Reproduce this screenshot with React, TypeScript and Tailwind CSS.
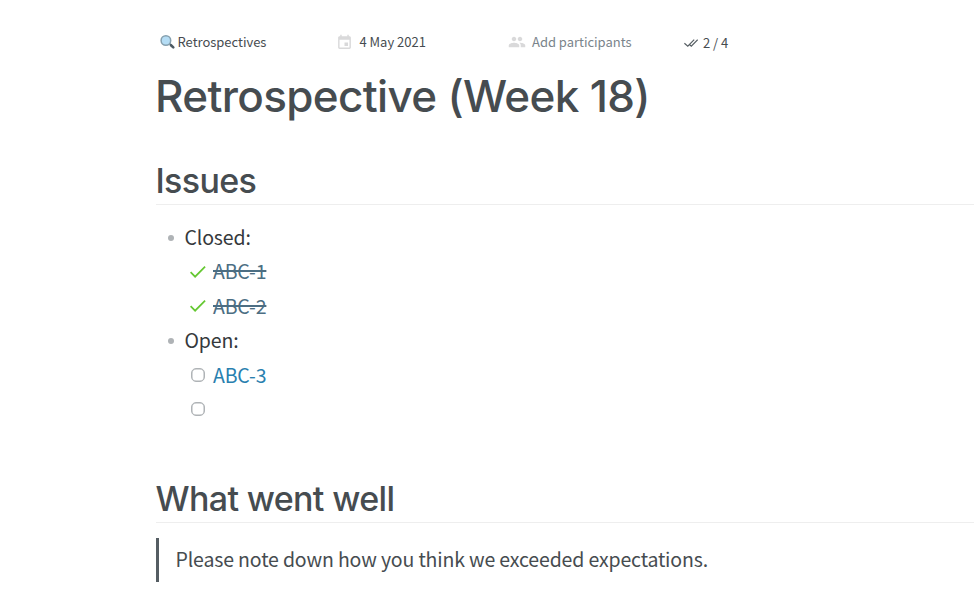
import React from 'react';

interface ListItem {
  label: string;
  tasks: { name: string; done: boolean }[];
}

const items: ListItem[] = [
  {
    label: 'Closed:',
    tasks: [
      { name: 'ABC-1', done: true },
      { name: 'ABC-2', done: true }
    ]
  },
  {
    label: 'Open:',
    tasks: [
      { name: 'ABC-3', done: false },
      { name: '', done: false }
    ]
  }
];

const SearchIcon = () => (
  <svg width="16" height="16" viewBox="0 0 16 16" fill="none">
    <path d="M9.5 9.5l1.6 1.6" stroke="#78909c" strokeWidth="1.8" />
    <path d="M11 11.2l2.3 2.2" stroke="#4c5a63" strokeWidth="2.6" strokeLinecap="round" />
    <circle cx="5.9" cy="6.5" r="4.8" fill="#b5ddf5" stroke="#86a0af" strokeWidth="1.5" />
  </svg>
);

const CalendarIcon = () => (
  <svg width="17" height="17" viewBox="0 0 24 24" fill="#d9d9da">
    <path d="M17 12h-5v5h5v-5zM16 1v2H8V1H6v2H5c-1.11 0-1.99.9-1.99 2L3 19c0 1.1.89 2 2 2h14c1.1 0 2-.9 2-2V5c0-1.1-.9-2-2-2h-1V1h-2zm3 18H5V8h14v11z" />
  </svg>
);

const PeopleIcon = () => (
  <svg width="18" height="18" viewBox="0 0 24 24" fill="#d9d9da">
    <path d="M16 11c1.66 0 2.99-1.34 2.99-3S17.66 5 16 5s-3 1.34-3 3 1.34 3 3 3zm-8 0c1.66 0 2.99-1.34 2.99-3S9.66 5 8 5 5 6.34 5 8s1.34 3 3 3zm0 2c-2.33 0-7 1.17-7 3.5V19h14v-2.5c0-2.33-4.67-3.5-7-3.5zm8 0c-.29 0-.62.02-.97.05 1.16.84 1.97 1.97 1.97 3.45V19h6v-2.5c0-2.33-4.67-3.5-7-3.5z" />
  </svg>
);

const DoubleCheckIcon = () => (
  <svg width="14" height="10" viewBox="0 0 14 10" fill="none" stroke="#565e63" strokeWidth="1.2">
    <path d="M.4 5.2l3.4 3 6.4-6.5M5.2 6.2l2.1 2L13.7 1.7" />
  </svg>
);

const CheckIcon = () => (
  <svg width="16" height="12" viewBox="0 0 16 12" fill="none" stroke="#65c832" strokeWidth="1.7">
    <path d="M.6 6.1l4.5 4.6L15.1.6" />
  </svg>
);

const Heading = ({ children }: { children: React.ReactNode }) => (
  <h2 className="h-[50px] border-b border-[#eeeeee] font-['Inter',sans-serif] text-[34px] font-[450] leading-[51px] tracking-[-0.65px] text-[#464c50]">
    <span className="-ml-[0.5px]">{children}</span>
  </h2>
);

export default function App() {
  return (
    <div className="h-[607px] overflow-hidden bg-white pl-[156px] pt-8 font-['Noto_Sans_CJK_SC',sans-serif] text-[#464c50]">
      <div className="flex h-5 items-center text-[13px] leading-5 tracking-[-0.02px]">
        <div className="flex w-[180px] items-center pl-[4px]">
          <SearchIcon />
          <span className="ml-[1.5px]">Retrospectives</span>
        </div>
        <div className="flex w-[172px] items-center">
          <CalendarIcon />
          <span className="ml-[6.5px]">4 May 2021</span>
        </div>
        <div className="flex w-[176px] items-center text-[#7a848b]">
          <PeopleIcon />
          <span className="ml-[6px]">Add participants</span>
        </div>
        <div className="flex items-center pt-[2px]">
          <DoubleCheckIcon />
          <span className="ml-[5px]">2 / 4</span>
        </div>
      </div>

      <h1 className="-ml-px mt-[14px] h-[60px] font-['Inter',sans-serif] text-[44px] font-[450] leading-[60px] tracking-[-0.66px]">
        Retrospective (Week 18)
      </h1>

      <div className="mt-[29px]">
        <Heading>Issues</Heading>
      </div>

      <ul className="mt-[15px] text-[19.5px] leading-[34.4px] tracking-[-0.15px] text-[#35393c]">
        {items.map((item) => (
          <li key={item.label}>
            <div className="flex h-[34.4px] items-center">
              <span className="ml-3 mr-[10.5px] mt-[2px] h-[6px] w-[6px] rounded-full bg-[#afb3b6]" />
              <span>{item.label}</span>
            </div>
            {item.tasks.map((task, i) => (
              <div key={i} className="flex h-[34.4px] items-center pl-[34px]">
                <span className="flex w-[23px] items-center">
                  {task.done ? (
                    <CheckIcon />
                  ) : (
                    <span className="ml-[1px] h-[14px] w-[14px] rounded-[5px] border-[1.5px] border-[#afb3b6] shadow-[inset_0_0_0_0.5px_#afb3b6]" />
                  )}
                </span>
                <a className={task.done ? 'text-[#4c6e83] line-through decoration-[1.5px]' : 'text-[#2980af]'}>{task.name}</a>
              </div>
            ))}
          </li>
        ))}
      </ul>

      <div className="mt-[46.6px]">
        <Heading>What went well</Heading>
      </div>

      <blockquote className="mt-[15px] h-11 border-l-[3px] border-[#555d63] pl-[16.5px] text-[19.5px] leading-[42px] tracking-[-0.15px]">
        Please note down how you think we exceeded expectations.
      </blockquote>
    </div>
  );
}
